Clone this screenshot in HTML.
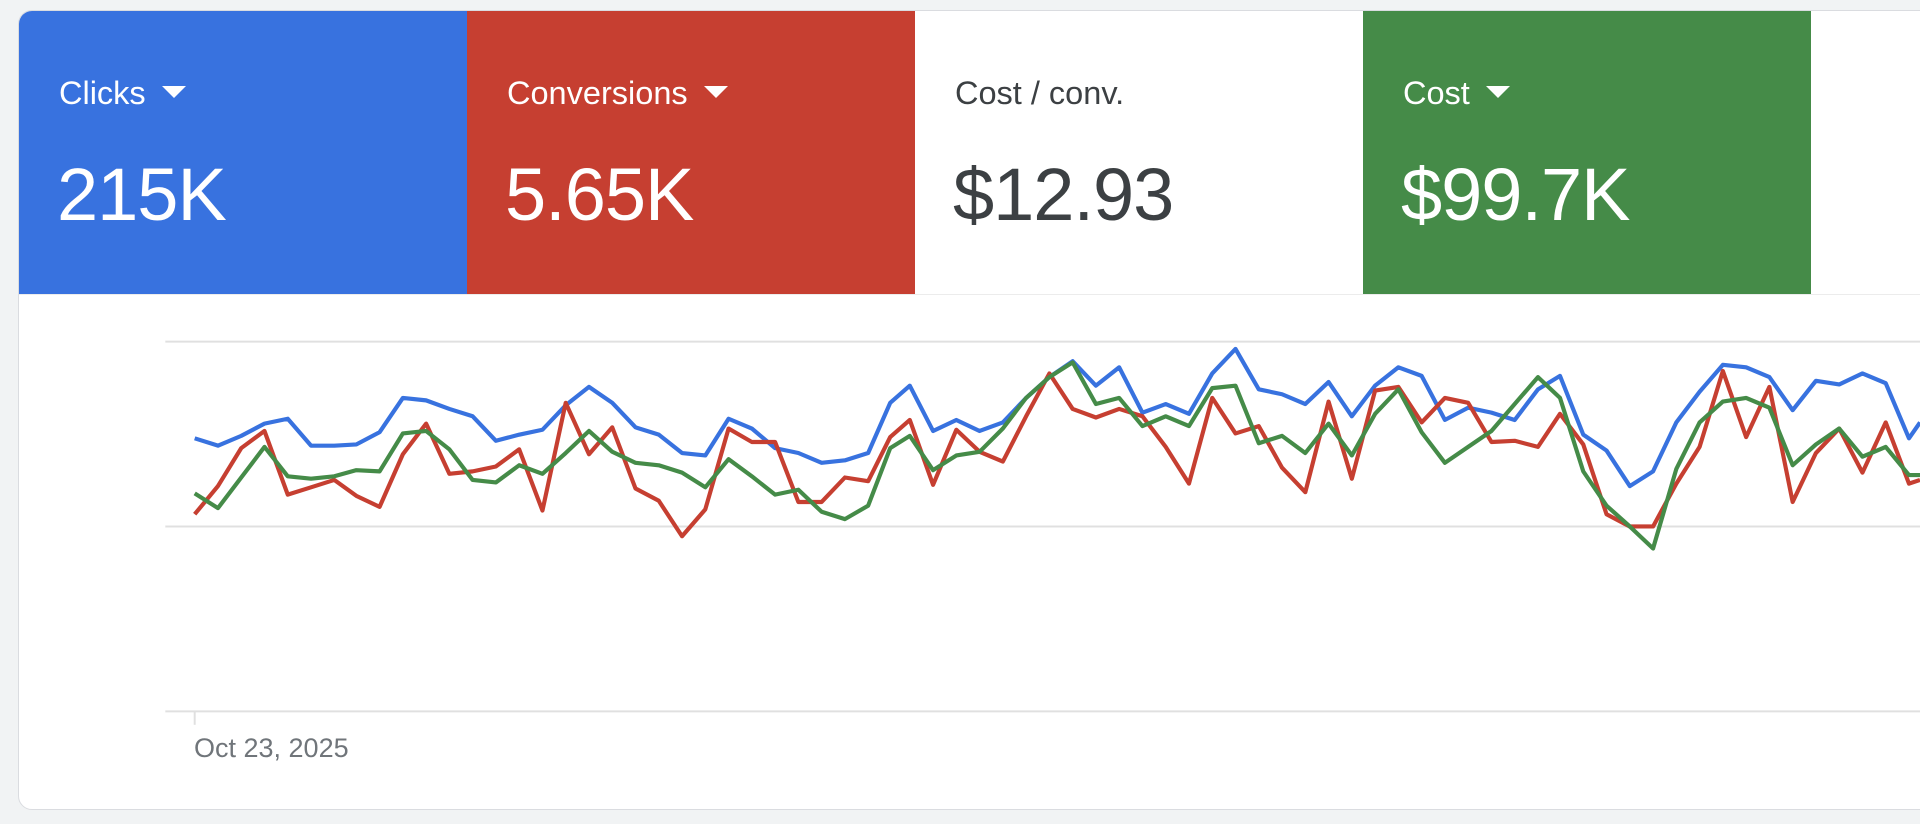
<!DOCTYPE html>
<html><head><meta charset="utf-8"><style>
html,body{margin:0;padding:0;width:1920px;height:824px;overflow:hidden;background:#f1f3f4;font-family:"Liberation Sans",Arial,sans-serif}
.card{position:absolute;left:18px;top:10px;width:1940px;height:798px;background:#fff;border:1px solid #dadce0;border-radius:14px;overflow:hidden}
.tile{position:absolute;top:0;height:283px;width:448px;color:#fff}
.lab{position:absolute;left:40px;top:64px;font-size:32.5px;line-height:36px;white-space:nowrap}
.tri{display:inline-block;width:0;height:0;border-left:12px solid transparent;border-right:12px solid transparent;border-top:12px solid currentColor;margin-left:16px;vertical-align:middle;position:relative;top:-3px}
.val{position:absolute;left:38px;top:139px;font-size:74px;line-height:90px;letter-spacing:-1px;white-space:nowrap}
.rowline{position:absolute;left:0;top:283px;width:100%;height:1px;background:#ececec}
</style></head><body>
<div class="card">
  <div class="rowline"></div>
  <div class="tile" style="left:0;background:#3872df"><div class="lab">Clicks<span class="tri"></span></div><div class="val">215K</div></div>
  <div class="tile" style="left:448px;background:#c63f31"><div class="lab">Conversions<span class="tri"></span></div><div class="val">5.65K</div></div>
  <div class="tile" style="left:896px;background:#fff;color:#3c4043"><div class="lab">Cost / conv.</div><div class="val">$12.93</div></div>
  <div class="tile" style="left:1344px;background:#458b48"><div class="lab">Cost<span class="tri"></span></div><div class="val">$99.7K</div></div>
</div>
<svg style="position:absolute;left:0;top:0" width="1920" height="824" viewBox="0 0 1568 673" preserveAspectRatio="none">
<g stroke="#e0e0e0" stroke-width="1.6"><line x1="135" y1="279" x2="1568" y2="279"/><line x1="135" y1="430" x2="1568" y2="430"/><line x1="135" y1="581" x2="1568" y2="581"/><line x1="159" y1="581" x2="159" y2="592"/></g>
<g fill="none" stroke-width="3.4" stroke-linejoin="round">
<polyline stroke="#3872df" points="159,358 178,364 197,356 216,346 235,342 254,364 273,364 291,363 310,353 329,325 348,327 367,334 386,340 405,360 424,355 443,351 462,331 481,316 500,329 519,349 538,355 557,370 576,372 595,342 614,350 633,366 652,370 671,378 690,376 709,370 727,329 743,315 762,352 781,343 800,352 819,345 838,325 857,308 876,295 895,315 914,300 933,337 952,330 971,338 990,305 1009,285 1028,318 1047,322 1066,330 1085,312 1104,340 1123,315 1142,300 1161,307 1180,343 1199,333 1218,337 1237,343 1256,318 1274,307 1293,355 1312,368 1331,397 1350,385 1369,345 1388,320 1407,298 1426,300 1445,308 1464,335 1483,311 1502,314 1521,305 1540,313 1559,358 1568,345"/>
<polyline stroke="#c63f31" points="159,420 178,397 197,366 216,352 235,404 254,398 273,392 291,405 310,414 329,371 348,346 367,387 386,385 405,381 424,367 443,417 462,329 481,371 500,349 519,399 538,409 557,438 576,416 595,350 614,361 633,361 652,410 671,410 690,390 709,393 727,357 743,343 762,396 781,351 800,369 819,377 838,340 857,305 876,334 895,341 914,334 933,340 952,365 971,395 990,325 1009,354 1028,348 1047,382 1066,402 1085,328 1104,391 1123,319 1142,316 1161,345 1180,325 1199,329 1218,361 1237,360 1256,365 1274,338 1293,363 1312,420 1331,430 1350,430 1369,395 1388,365 1407,303 1426,357 1445,316 1464,410 1483,370 1502,350 1521,386 1540,345 1559,395 1568,392"/>
<polyline stroke="#458b48" points="159,403 178,415 197,390 216,365 235,389 254,391 273,389 291,384 310,385 329,354 348,352 367,367 386,392 405,394 424,380 443,387 462,370 481,352 500,369 519,378 538,380 557,386 576,398 595,375 614,389 633,404 652,400 671,418 690,424 709,413 727,366 743,356 762,384 781,372 800,369 819,350 838,325 857,308 876,296 895,330 914,325 933,348 952,340 971,348 990,317 1009,315 1028,362 1047,356 1066,370 1085,346 1104,372 1123,338 1142,318 1161,353 1180,378 1199,365 1218,352 1237,330 1256,308 1274,325 1293,385 1312,413 1331,430 1350,448 1369,383 1388,345 1407,328 1426,325 1445,333 1464,380 1483,363 1502,350 1521,373 1540,365 1559,388 1568,388"/>
</g>
</svg>
<div style="position:absolute;left:194px;top:733px;font-size:27px;line-height:30px;color:#70757a">Oct 23, 2025</div>
</body></html>
